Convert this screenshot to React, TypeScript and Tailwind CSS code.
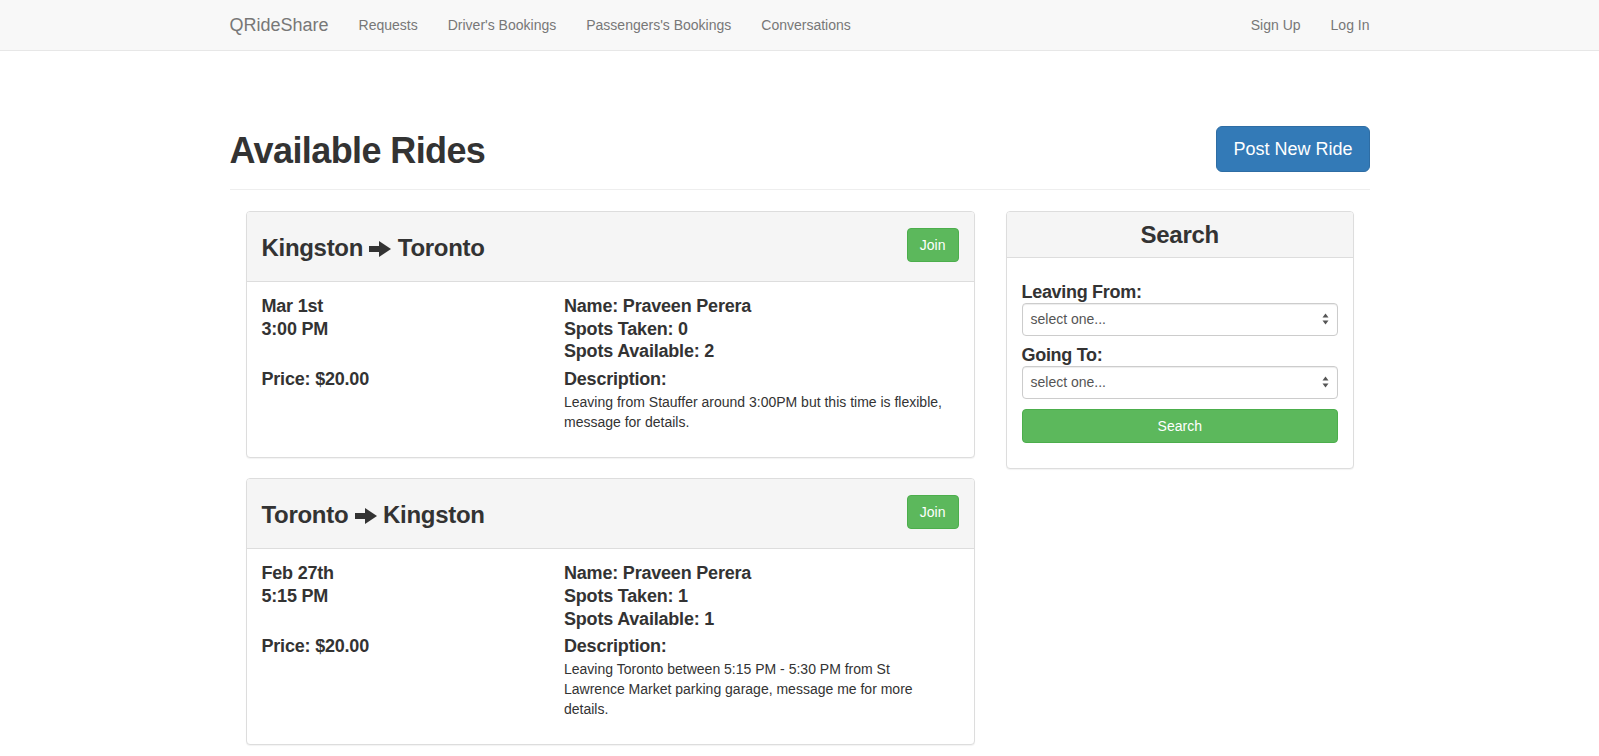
import React from "react";

const Arrow = () => (
  <svg
    width="22"
    height="16"
    viewBox="0 0 22 16"
    className="inline-block align-[-1px]"
    fill="#333"
  >
    <rect x="0" y="5" width="11" height="6" />
    <polygon points="10,0 22,8 10,16" />
  </svg>
);

const SelectArrows = () => (
  <svg width="7" height="12" viewBox="0 0 7 12" fill="#555">
    <polygon points="3.5,0.5 6.5,4.5 0.5,4.5" />
    <polygon points="0.5,7.5 6.5,7.5 3.5,11.5" />
  </svg>
);

type Ride = {
  from: string;
  to: string;
  date: string;
  time: string;
  price: string;
  name: string;
  taken: number;
  available: number;
  desc: string[];
};

const rides: Ride[] = [
  {
    from: "Kingston",
    to: "Toronto",
    date: "Mar 1st",
    time: "3:00 PM",
    price: "$20.00",
    name: "Praveen Perera",
    taken: 0,
    available: 2,
    desc: [
      "Leaving from Stauffer around 3:00PM but this time is flexible,",
      "message for details.",
    ],
  },
  {
    from: "Toronto",
    to: "Kingston",
    date: "Feb 27th",
    time: "5:15 PM",
    price: "$20.00",
    name: "Praveen Perera",
    taken: 1,
    available: 1,
    desc: [
      "Leaving Toronto between 5:15 PM - 5:30 PM from St",
      "Lawrence Market parking garage, message me for more",
      "details.",
    ],
  },
];

function RideCard({ ride }: { ride: Ride }) {
  return (
    <div className="border border-[#ddd] rounded-[4px] bg-white shadow-[0_1px_1px_rgba(0,0,0,0.05)]">
      <div className="h-[70px] bg-[#f5f5f5] border-b border-[#ddd] rounded-t-[3px] px-[15px] flex justify-between items-start">
        <h3 className="mt-[23px] text-[24px] leading-[26.4px] font-bold tracking-[-0.3px] whitespace-nowrap">
          {ride.from} <Arrow /> {ride.to}
        </h3>
        <button className="mt-[16px] h-[34px] px-[12px] text-[14px] leading-[20px] text-white bg-[#5cb85c] border border-[#4cae4c] rounded-[4px]">
          Join
        </button>
      </div>
      <div className="pt-[13px] px-[15px] pb-[25px] flex">
        <div className="w-[302.5px] shrink-0 text-[18px] leading-[22.7px] font-bold tracking-[-0.2px]">
          <div className="h-[68.1px]">
            <div>{ride.date}</div>
            <div>{ride.time}</div>
          </div>
          <div className="mt-[4.6px]">Price: {ride.price}</div>
        </div>
        <div className="flex-1">
          <div className="h-[68.1px] text-[18px] leading-[22.7px] font-bold tracking-[-0.2px]">
            <div>Name: {ride.name}</div>
            <div>Spots Taken: {ride.taken}</div>
            <div>Spots Available: {ride.available}</div>
          </div>
          <div className="mt-[4.6px] text-[18px] leading-[22.7px] font-bold tracking-[-0.2px]">
            Description:
          </div>
          <p className="mt-[1.5px] text-[14px] leading-[20px] whitespace-nowrap">
            {ride.desc.map((l, i) => (
              <React.Fragment key={i}>
                {l}
                {i < ride.desc.length - 1 && <br />}
              </React.Fragment>
            ))}
          </p>
        </div>
      </div>
    </div>
  );
}

function FakeSelect() {
  return (
    <div className="h-[33px] bg-white border border-[#ccc] rounded-[4px] shadow-[inset_0_1px_1px_rgba(0,0,0,0.075)] flex items-center justify-between pl-[8px] pr-[8px] text-[14px] text-[#555]">
      <span>select one...</span>
      <SelectArrows />
    </div>
  );
}

export default function App() {
  return (
    <div className="h-screen overflow-hidden bg-white text-[#333] font-['Liberation_Sans',Arial,sans-serif]">
      <nav className="h-[51px] bg-[#f8f8f8] border-b border-[#e7e7e7]">
        <div className="mx-auto w-[1140px] h-[50px] flex justify-between">
          <div className="flex">
            <a className="-ml-[15px] p-[15px] text-[18px] leading-[20px] text-[#777]">
              QRideShare
            </a>
            {["Requests", "Driver's Bookings", "Passengers's Bookings", "Conversations"].map(
              (l) => (
                <a key={l} className="px-[15px] py-[15px] text-[14px] leading-[20px] text-[#777]">
                  {l}
                </a>
              )
            )}
          </div>
          <div className="flex -mr-[15px]">
            {["Sign Up", "Log In"].map((l) => (
              <a key={l} className="px-[15px] py-[15px] text-[14px] leading-[20px] text-[#777]">
                {l}
              </a>
            ))}
          </div>
        </div>
      </nav>

      <main className="mx-auto w-[1140px]">
        <div className="mt-[75px] h-[64px] border-b border-[#eee] flex justify-between items-start">
          <h1 className="mt-[5px] text-[36px] leading-[40px] font-bold tracking-[-0.6px]">
            Available Rides
          </h1>
          <button className="h-[46px] px-[16px] text-[18px] leading-[24px] text-white bg-[#337ab7] border border-[#2e6da4] rounded-[6px]">
            Post New Ride
          </button>
        </div>

        <div className="mt-[21px] flex items-start pl-[16px] pr-[15.5px] gap-[31px]">
          <div className="w-[729px] shrink-0 flex flex-col gap-[20.5px]">
            {rides.map((r, i) => (
              <RideCard key={i} ride={r} />
            ))}
          </div>

          <div className="flex-1 border border-[#ddd] rounded-[4px] bg-white shadow-[0_1px_1px_rgba(0,0,0,0.05)]">
            <div className="h-[46px] bg-[#f5f5f5] border-b border-[#ddd] rounded-t-[3px] pt-[10px] text-center">
              <h3 className="text-[24px] leading-[26.4px] font-bold tracking-[-0.3px]">Search</h3>
            </div>
            <div className="pt-[25px] px-[15px] pb-[25px]">
              <div className="text-[18px] leading-[19.8px] font-bold tracking-[-0.3px]">
                Leaving From:
              </div>
              <FakeSelect />
              <div className="mt-[10px] text-[18px] leading-[19.8px] font-bold tracking-[-0.3px]">
                Going To:
              </div>
              <FakeSelect />
              <button className="mt-[10.5px] w-full h-[34px] text-[14px] leading-[20px] text-white bg-[#5cb85c] border border-[#4cae4c] rounded-[4px]">
                Search
              </button>
            </div>
          </div>
        </div>
      </main>
    </div>
  );
}
